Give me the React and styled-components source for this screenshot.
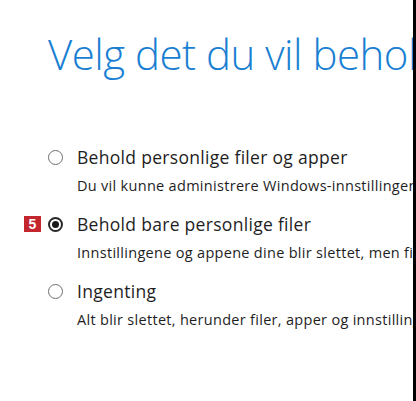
import React from 'react';
import styled, { createGlobalStyle } from 'styled-components';

const GlobalStyle = createGlobalStyle`
    html, body {
        margin: 0;
        padding: 0;
        background: #fff;
    }
    body {
        font-family: 'Open Sans', 'Noto Sans', sans-serif;
    }
`;

const options = [
    { label: 'Behold personlige filer og apper', desc: 'Du vil kunne administrere Windows-innstillingene dine.' },
    { label: 'Behold bare personlige filer', desc: 'Innstillingene og appene dine blir slettet, men filene dine beholdes.', checked: true, badge: '5' },
    { label: 'Ingenting', desc: 'Alt blir slettet, herunder filer, apper og innstillinger.' },
];

export default function App() {
    return (
        <Screen>
            <GlobalStyle />
            <Content>
                <Title>Velg det du vil beholde</Title>
                <OptionList>
                    {options.map((o) => (
                        <Option key={o.label}>
                            <LabelRow>
                                {o.badge && <Badge>{o.badge}</Badge>}
                                <Radio checked={o.checked} />
                                <Label>{o.label}</Label>
                            </LabelRow>
                            <Desc>{o.desc}</Desc>
                        </Option>
                    ))}
                </OptionList>
            </Content>
            <Edge />
        </Screen>
    );
}

const Screen = styled.div`
    display: flex;
    width: 416px;
    height: 401px;
    overflow: hidden;
`;

const Content = styled.div`
    flex: 1;
    min-width: 0;
    overflow: hidden;
    padding: 26px 0 0 48px;
    white-space: nowrap;
`;

const Edge = styled.div`
    width: 3px;
    background: #000;
`;

const Title = styled.h1`
    margin: 0;
    font-family: 'Open Sans', sans-serif;
    font-weight: 300;
    font-size: 42px;
    letter-spacing: -0.5px;
    line-height: 56px;
    color: #1a7fd2;
`;

const OptionList = styled.div`
    display: flex;
    flex-direction: column;
    gap: 17px;
    margin-top: 63px;
`;

const Option = styled.div`
    display: flex;
    flex-direction: column;
`;

const LabelRow = styled.div`
    position: relative;
    display: flex;
    align-items: center;
    height: 24px;
`;

const Badge = styled.span`
    position: absolute;
    left: -24px;
    top: 4px;
    width: 17px;
    height: 16px;
    background: #c4262e;
    color: #fff;
    font-family: 'Liberation Sans', sans-serif;
    font-weight: 700;
    font-size: 14px;
    line-height: 16px;
    text-align: center;
`;

const Radio = styled.span`
    box-sizing: border-box;
    flex: none;
    width: 15px;
    height: 15px;
    border: ${(p) => (p.checked ? '2px solid #2a2a2a' : '1.5px solid #6e6e6e')};
    border-radius: 50%;
    margin-right: 14px;
    display: flex;
    align-items: center;
    justify-content: center;
    &::after {
        content: '';
        width: 7px;
        height: 7px;
        border-radius: 50%;
        background: ${(p) => (p.checked ? '#1a1a1a' : 'transparent')};
    }
`;

const Label = styled.span`
    font-size: 17.5px;
    letter-spacing: 0.3px;
    color: #1e1e1e;
`;

const Desc = styled.div`
    margin: 8px 0 0 29px;
    font-size: 14.5px;
    letter-spacing: 0.3px;
    line-height: 18px;
    color: #1e1e1e;
`;
